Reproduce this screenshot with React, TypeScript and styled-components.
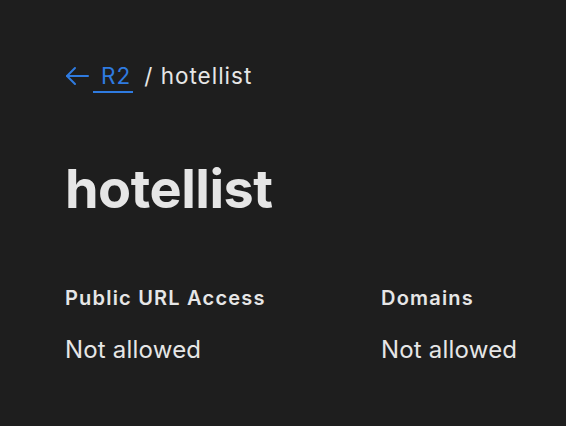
import styled, { createGlobalStyle } from 'styled-components';

const GlobalStyle = createGlobalStyle`
  html, body {
    margin: 0;
    background: #1e1e1e;
    font-family: Inter, "Noto Sans", sans-serif;
    -webkit-font-smoothing: antialiased;
  }
`;

const Page = styled.main`
  padding: 58px 65px;
  color: #e6e6e6;
`;

const Breadcrumb = styled.nav`
  display: flex;
  align-items: center;
  gap: 11px;
  font-size: 22.5px;
  letter-spacing: 1px;
  line-height: 36px;
`;

const BackLink = styled.a`
  display: flex;
  align-items: center;
  gap: 4px;
  color: #2f7be0;
  text-decoration: none;
`;

const LinkLabel = styled.span`
  padding: 0 2px 0 8px;
  border-bottom: 2px solid #2f7be0;
  line-height: 31px;
`;

const Crumb = styled.span`
  color: #e6e6e6;
`;

const Title = styled.h1`
  margin: 59px 0 0;
  font-size: 54px;
  font-weight: 700;
  line-height: 72px;
  letter-spacing: -0.5px;
`;

const Details = styled.dl`
  display: grid;
  grid-template-columns: 316px 1fr;
  margin: 59px 0 0;
`;

const Field = styled.div`
  display: flex;
  flex-direction: column;
  gap: 22px;
  white-space: nowrap;
`;

const Label = styled.dt`
  font-size: 20px;
  font-weight: 600;
  letter-spacing: 1.2px;
  line-height: 28px;
`;

const Value = styled.dd`
  margin: 0;
  font-size: 24px;
  letter-spacing: 0.2px;
  line-height: 32px;
`;

const ArrowLeft = () => (
  <svg width="24" height="20" viewBox="0 0 24 20" fill="none" stroke="currentColor" strokeWidth="2" strokeLinecap="round" strokeLinejoin="round">
    <path d="M23 10H2" />
    <path d="M10 2L2 10l8 8" />
  </svg>
);

export default function App() {
  return (
    <Page>
      <GlobalStyle />
      <Breadcrumb>
        <BackLink href="#">
          <ArrowLeft />
          <LinkLabel>R2</LinkLabel>
        </BackLink>
        <Crumb>/ hotellist</Crumb>
      </Breadcrumb>
      <Title>hotellist</Title>
      <Details>
        <Field>
          <Label>Public URL Access</Label>
          <Value>Not allowed</Value>
        </Field>
        <Field>
          <Label>Domains</Label>
          <Value>Not allowed</Value>
        </Field>
      </Details>
    </Page>
  );
}
